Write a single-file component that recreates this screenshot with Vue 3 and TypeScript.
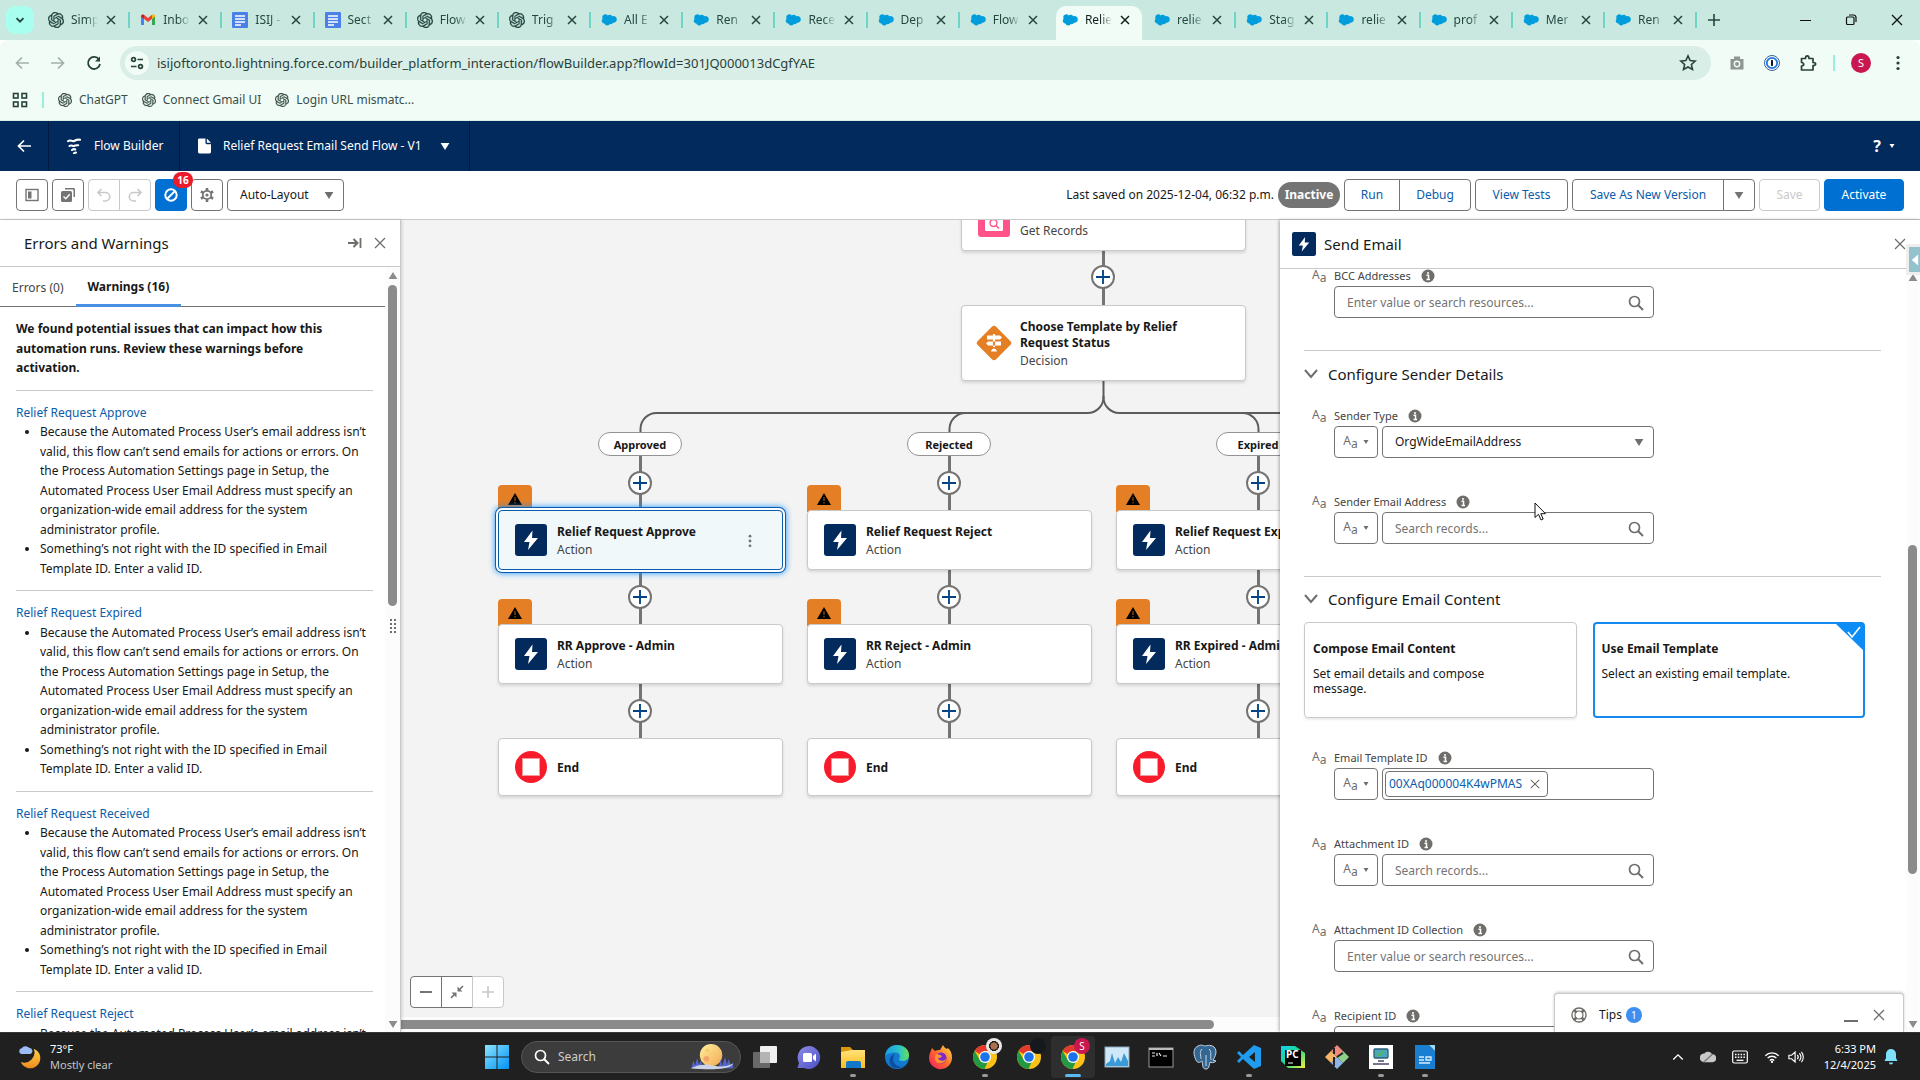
<script setup lang="ts">
import { ref } from 'vue'

interface BrowserTab { icon: string; title: string; active?: boolean }
interface Bookmark { title: string }
interface FlowNode { title: string; kind: string; icon: string; x: number; y: number; h: number; warn?: boolean; selected?: boolean }
interface Field { id: string; label: string; type: 'lookup' | 'resource' | 'select' | 'pill'; placeholder?: string }
interface TaskApp { icon: string; state?: 'open' | 'focus'; badge?: string }

const tabs: BrowserTab[] = [
  { icon: 'openai', title: 'Simp' },
  { icon: 'gmail', title: 'Inbo' },
  { icon: 'docs', title: 'ISIJ -' },
  { icon: 'docs', title: 'Sect' },
  { icon: 'openai', title: 'Flow' },
  { icon: 'openai', title: 'Trig' },
  { icon: 'cloud', title: 'All E' },
  { icon: 'cloud', title: 'Ren' },
  { icon: 'cloud', title: 'Rece' },
  { icon: 'cloud', title: 'Dep' },
  { icon: 'cloud', title: 'Flow' },
  { icon: 'cloud', title: 'Relie', active: true },
  { icon: 'cloud', title: 'relie' },
  { icon: 'cloud', title: 'Stag' },
  { icon: 'cloud', title: 'relie' },
  { icon: 'cloud', title: 'prof' },
  { icon: 'cloud', title: 'Mer' },
  { icon: 'cloud', title: 'Ren' },
]

const bookmarks: Bookmark[] = [
  { title: 'ChatGPT' },
  { title: 'Connect Gmail UI' },
  { title: 'Login URL mismatc...' },
]

const warnings = ['Relief Request Approve', 'Relief Request Expired', 'Relief Request Received', 'Relief Request Reject']

const columns = [97, 406, 715]
const nodes: FlowNode[] = [
  { title: 'Get Relief Request', kind: 'Get Records', icon: 'node-get', x: 560, y: -29, h: 60 },
  { title: 'Choose Template by Relief Request Status', kind: 'Decision', icon: 'node-decision', x: 560, y: 85, h: 76 },
  { title: 'Relief Request Approve', kind: 'Action', icon: 'node-action', x: 97, y: 290, h: 60, warn: true, selected: true },
  { title: 'Relief Request Reject', kind: 'Action', icon: 'node-action', x: 406, y: 290, h: 60, warn: true },
  { title: 'Relief Request Expired', kind: 'Action', icon: 'node-action', x: 715, y: 290, h: 60, warn: true },
  { title: 'RR Approve - Admin', kind: 'Action', icon: 'node-action', x: 97, y: 404, h: 60, warn: true },
  { title: 'RR Reject - Admin', kind: 'Action', icon: 'node-action', x: 406, y: 404, h: 60, warn: true },
  { title: 'RR Expired - Admin', kind: 'Action', icon: 'node-action', x: 715, y: 404, h: 60, warn: true },
  { title: 'End', kind: '', icon: 'node-end', x: 97, y: 518, h: 58 },
  { title: 'End', kind: '', icon: 'node-end', x: 406, y: 518, h: 58 },
  { title: 'End', kind: '', icon: 'node-end', x: 715, y: 518, h: 58 },
]
const branches = ['Approved', 'Rejected', 'Expired'].map((name, i) => ({ name, x: columns[i] + 100 }))
const adders = [
  { x: 690, y: 45 },
  ...columns.flatMap((x) => [251, 365, 479].map((y) => ({ x: x + 130, y }))),
]

const senderFields: Field[] = [
  { id: 'sender-type', label: 'Sender Type', type: 'select' },
  { id: 'sender-address', label: 'Sender Email Address', type: 'lookup', placeholder: 'Search records...' },
]
const contentFields: Field[] = [
  { id: 'template-id', label: 'Email Template ID', type: 'pill' },
  { id: 'attachment-id', label: 'Attachment ID', type: 'lookup', placeholder: 'Search records...' },
  { id: 'attachment-ids', label: 'Attachment ID Collection', type: 'resource', placeholder: 'Enter value or search resources...' },
  { id: 'recipient-id', label: 'Recipient ID', type: 'resource', placeholder: '' },
]
const sections = [
  { title: 'Configure Sender Details', fields: senderFields, cards: false },
  { title: 'Configure Email Content', fields: contentFields, cards: true },
]

const apps: TaskApp[] = [
  { icon: 'taskview' },
  { icon: 'chat' },
  { icon: 'folder', state: 'open' },
  { icon: 'edge' },
  { icon: 'firefox' },
  { icon: 'chrome', state: 'open', badge: 'face' },
  { icon: 'chrome', badge: 'dark' },
  { icon: 'chrome', state: 'focus', badge: 'pink' },
  { icon: 'monitor' },
  { icon: 'terminal' },
  { icon: 'postgres' },
  { icon: 'vscode', state: 'open' },
  { icon: 'pycharm' },
  { icon: 'git' },
  { icon: 'taskpro', state: 'open' },
  { icon: 'writer', state: 'open' },
]

const url = ref('isijoftoronto.lightning.force.com/builder_platform_interaction/flowBuilder.app?flowId=301JQ000013dCgfYAE')
const contentMode = ref('template')
const search = ref('')
</script>

<template>
  <svg class="defs" aria-hidden="true">
    <defs>
      <linearGradient id="g-win" x1="0" y1="0" x2="1" y2="1"><stop offset="0" stop-color="#8be3ff" /><stop offset="1" stop-color="#0093f5" /></linearGradient>
      <linearGradient id="g-chat" x1="0" y1="0" x2="1" y2="1"><stop offset="0" stop-color="#8f8be8" /><stop offset="1" stop-color="#4a4fc4" /></linearGradient>
      <linearGradient id="g-folder" x1="0" y1="0" x2="0" y2="1"><stop offset="0" stop-color="#ffe27a" /><stop offset="1" stop-color="#fbbd1d" /></linearGradient>
      <linearGradient id="g-edge" x1="0" y1="0" x2="1" y2="0"><stop offset="0" stop-color="#1b9de2" /><stop offset=".6" stop-color="#2cc3c9" /><stop offset="1" stop-color="#6ae04f" /></linearGradient>
      <linearGradient id="g-fox" x1="0" y1="1" x2="1" y2="0"><stop offset="0" stop-color="#f5156c" /><stop offset=".5" stop-color="#ff6a2a" /><stop offset="1" stop-color="#ffe14a" /></linearGradient>
      <linearGradient id="g-moon" x1="0" y1="0" x2="1" y2="1"><stop offset="0" stop-color="#fff0a0" /><stop offset="1" stop-color="#f2a850" /></linearGradient>
      <linearGradient id="g-cres" x1="0" y1="0" x2="0" y2="1"><stop offset="0" stop-color="#fcd34a" /><stop offset="1" stop-color="#f08a1c" /></linearGradient>
      <linearGradient id="g-pyc" x1="0" y1="0" x2="1" y2="1"><stop offset="0" stop-color="#12d0f5" /><stop offset=".5" stop-color="#20d98a" /><stop offset="1" stop-color="#f7f237" /></linearGradient>
    </defs>
    <symbol id="openai" viewBox="0 0 24 24"><path fill="currentColor" stroke="currentColor" stroke-width=".5" d="M22.2819 9.8211a5.9847 5.9847 0 0 0-.5157-4.9108 6.0462 6.0462 0 0 0-6.5098-2.9A6.0651 6.0651 0 0 0 4.9807 4.1818a5.9847 5.9847 0 0 0-3.9977 2.9 6.0462 6.0462 0 0 0 .7427 7.0966 5.98 5.98 0 0 0 .511 4.9107 6.051 6.051 0 0 0 6.5146 2.9001A5.9847 5.9847 0 0 0 13.2599 24a6.0557 6.0557 0 0 0 5.7718-4.2058 5.9894 5.9894 0 0 0 3.9977-2.9001 6.0557 6.0557 0 0 0-.7475-7.0729zm-9.022 12.6081a4.4755 4.4755 0 0 1-2.8764-1.0408l.1419-.0804 4.7783-2.7582a.7948.7948 0 0 0 .3927-.6813v-6.7369l2.02 1.1686a.071.071 0 0 1 .038.052v5.5826a4.504 4.504 0 0 1-4.4945 4.4944zm-9.6607-4.1254a4.4708 4.4708 0 0 1-.5346-3.0137l.142.0852 4.783 2.7582a.7712.7712 0 0 0 .7806 0l5.8428-3.3685v2.3324a.0804.0804 0 0 1-.0332.0615L9.74 19.9502a4.4992 4.4992 0 0 1-6.1408-1.6464zM2.3408 7.8956a4.485 4.485 0 0 1 2.3655-1.9728V11.6a.7664.7664 0 0 0 .3879.6765l5.8144 3.3543-2.0201 1.1685a.0757.0757 0 0 1-.071 0l-4.8303-2.7865A4.504 4.504 0 0 1 2.3408 7.872zm16.5963 3.8558L13.1038 8.364 15.1192 7.2a.0757.0757 0 0 1 .071 0l4.8303 2.7913a4.4944 4.4944 0 0 1-.6765 8.1042v-5.6772a.79.79 0 0 0-.407-.667zm2.0107-3.0231l-.142-.0852-4.7735-2.7818a.7759.7759 0 0 0-.7854 0L9.409 9.2297V6.8974a.0662.0662 0 0 1 .0284-.0615l4.8303-2.7866a4.4992 4.4992 0 0 1 6.6802 4.66zM8.3065 12.863l-2.02-1.1638a.0804.0804 0 0 1-.038-.0567V6.0742a4.4992 4.4992 0 0 1 7.3757-3.4537l-.142.0805L8.704 5.459a.7948.7948 0 0 0-.3927.6813zm1.0976-2.3654l2.602-1.4998 2.6069 1.4998v2.9994l-2.5974 1.4997-2.6067-1.4997Z" /></symbol>
    <symbol id="gmail" viewBox="0 0 16 16"><path d="M1 3.500v9.500h3V7z" fill="#4285f4" /><path d="M15 3.500v9.500h-3V7z" fill="#34a853" /><path d="M1 4.500 8 10l7-5.500-1-1.500-2-.3L8 6 4 2.700 2 3z" fill="#ea4335" /><path d="M12 3v4l3-2.500C15 3 13.500 2 12 3z" fill="#fbbc04" /><path d="M4 3v4L1 4.500C1 3 2.500 2 4 3z" fill="#c5221f" /></symbol>
    <symbol id="docs" viewBox="0 0 16 16"><rect width="16" height="16" rx="1" fill="#4a80e8" /><path d="M3 4h10M3 7h10M3 10h10M3 13h6" stroke="#fff" stroke-width="1.300" /></symbol>
    <symbol id="cloud" viewBox="0 0 16 16"><path d="M6.700 3.600a3 3 0 0 1 4.600.6 3.400 3.400 0 1 1 .8 6.600 2.700 2.700 0 0 1-3.400 1.100 3 3 0 0 1-5.400-.3A2.900 2.900 0 0 1 1.600 6.700 3 3 0 0 1 6.700 3.600z" fill="#009ddc" /></symbol>
    <symbol id="x" viewBox="0 0 12 12"><path d="M2 2l8 8M10 2l-8 8" stroke="currentColor" stroke-width="1.500" fill="none" /></symbol>
    <symbol id="x-thin" viewBox="0 0 12 12"><path d="M1 1l10 10M11 1L1 11" stroke="currentColor" stroke-width="1.300" fill="none" /></symbol>
    <symbol id="plus" viewBox="0 0 12 12"><path d="M6 0v12M0 6h12" stroke="currentColor" stroke-width="1.600" /></symbol>
    <symbol id="down" viewBox="0 0 12 12"><path d="M2.500 4.200 6 7.700l3.500-3.500" stroke="currentColor" stroke-width="1.900" fill="none" /></symbol>
    <symbol id="restore" viewBox="0 0 12 12"><rect x="1.500" y="3" width="7.500" height="7.500" rx="1" fill="none" stroke="currentColor" stroke-width="1.200" /><path d="M4 1h4.500A2.500 2.500 0 0 1 11 3.500V8" fill="none" stroke="currentColor" stroke-width="1.200" /></symbol>
    <symbol id="arrow-l" viewBox="0 0 16 16"><path d="M8 2.500 2.500 8 8 13.500M2.500 8H15" stroke="currentColor" stroke-width="1.700" fill="none" /></symbol>
    <symbol id="arrow-r" viewBox="0 0 16 16"><path d="M8 2.500 13.500 8 8 13.500M13.500 8H1" stroke="currentColor" stroke-width="1.700" fill="none" /></symbol>
    <symbol id="reload" viewBox="0 0 16 16"><path d="M13 4.500A6 6 0 1 0 14 9" stroke="currentColor" stroke-width="1.800" fill="none" /><path d="M14 1.500v5H9z" fill="currentColor" /></symbol>
    <symbol id="tune" viewBox="0 0 16 16"><g stroke="currentColor" stroke-width="1.700" fill="none"><circle cx="4.500" cy="4.500" r="1.900" /><path d="M8.500 4.500H14M2 11.500h5.500" /><circle cx="11.500" cy="11.500" r="1.900" /></g></symbol>
    <symbol id="star" viewBox="0 0 16 16"><path d="M8 1.700l1.900 4.100 4.500.5-3.400 3 1 4.400L8 11.500l-4 2.200 1-4.400-3.400-3 4.500-.5z" fill="none" stroke="currentColor" stroke-width="1.400" /></symbol>
    <symbol id="camera" viewBox="0 0 16 16"><path fill="#8f9693" d="M5 3V1.500h6V4h3.500v10.500h-13V4H5z" /><circle cx="8" cy="9" r="3.400" fill="#f1fcf6" /><circle cx="8" cy="9" r="2" fill="#8f9693" /></symbol>
    <symbol id="onepass" viewBox="0 0 16 16"><circle cx="8" cy="8" r="7.500" fill="#fff" stroke="#3c5f8f" /><circle cx="8" cy="8" r="5.200" fill="#fff" stroke="#1a78e0" stroke-width="1.800" /><rect x="7" y="4.800" width="2" height="6.400" rx="1" fill="#113" /></symbol>
    <symbol id="puzzle" viewBox="0 0 18 18"><path d="M2.500 4.500h4c0-3.500 3.500-3.500 3.500 0h4v4c3.500 0 3.500 3 0 3v4.500H2.500v-4c3-.5 3-3 0-3.500z" fill="none" stroke="currentColor" stroke-width="1.700" stroke-linejoin="round" /></symbol>
    <symbol id="grid4" viewBox="0 0 16 16"><g fill="none" stroke="currentColor" stroke-width="1.600"><rect x="1.500" y="1.500" width="4.500" height="4.500" /><rect x="10" y="1.500" width="4.500" height="4.500" /><rect x="1.500" y="10" width="4.500" height="4.500" /><rect x="10" y="10" width="4.500" height="4.500" /></g></symbol>
    <symbol id="dots" viewBox="0 0 16 16"><g fill="currentColor"><circle cx="8" cy="2.500" r="1.600" /><circle cx="8" cy="8" r="1.600" /><circle cx="8" cy="13.500" r="1.600" /></g></symbol>
    <symbol id="caret" viewBox="0 0 10 8"><path d="M0 0h10L5 8z" fill="currentColor" /></symbol>
    <symbol id="flow" viewBox="0 0 16 16"><g fill="none" stroke="currentColor" stroke-width="2.100" stroke-linecap="round"><path d="M2 3.200c2.500-2 4 .8 6-.2s3.500-2 6-1.200" /><path d="M3.500 8c2-1.500 3 .3 4.500 0s2.500-1.200 4.200-.7" /><path d="M6 12c.8-.6 2.400-1 3.200-.5M8 15.200l2-.6" /></g></symbol>
    <symbol id="doc" viewBox="0 0 14 16"><path d="M2 0h6v4.500C8 5.400 8.600 6 9.500 6H14v8.500c0 .8-.7 1.500-1.500 1.500h-11C.7 16 0 15.300 0 14.500V1.500C0 .7.700 0 1.500 0zM9.500 0 14 4.500H9.500z" fill="currentColor" /></symbol>
    <symbol id="panel" viewBox="0 0 14 14"><rect x="1" y="1.500" width="12" height="11" fill="none" stroke="currentColor" stroke-width="1.400" /><rect x="3" y="3.500" width="3.500" height="7" fill="currentColor" /></symbol>
    <symbol id="multi" viewBox="0 0 14 14"><path d="M4 0h8.500c.8 0 1.500.7 1.500 1.500V9h-1.500V2.500c0-.6-.4-1-1-1H4z" fill="currentColor" /><rect x="0" y="3" width="11" height="11" rx="1.500" fill="currentColor" /><path d="M2.500 8.500l2.300 2.300L8.700 6.300" fill="none" stroke="#fff" stroke-width="1.400" /></symbol>
    <symbol id="undo" viewBox="0 0 14 14"><path d="M4.500 1 1 4.500 4.500 8M1 4.500h7.500a4 4 0 0 1 0 8.500H6" fill="none" stroke="currentColor" stroke-width="1.600" /></symbol>
    <symbol id="redo" viewBox="0 0 14 14"><path d="M9.500 1 13 4.500 9.500 8M13 4.500H5.500a4 4 0 0 0 0 8.500H8" fill="none" stroke="currentColor" stroke-width="1.600" /></symbol>
    <symbol id="ban" viewBox="0 0 14 14"><circle cx="7" cy="7" r="5.700" fill="none" stroke="currentColor" stroke-width="2" /><path d="M3.500 10.500l7-7" stroke="currentColor" stroke-width="2" /></symbol>
    <symbol id="gear" viewBox="0 0 14 14"><circle cx="7" cy="7" r="4.200" fill="none" stroke="currentColor" stroke-width="1.800" /><circle cx="7" cy="7" r="1.600" fill="currentColor" /><g stroke="currentColor" stroke-width="2.600"><path d="M7 0v2.500M7 11.500V14M.9 3.500l2.200 1.200M10.900 9.300l2.200 1.200M.9 10.500l2.200-1.200M10.900 4.700l2.200-1.200" /></g></symbol>
    <symbol id="dock" viewBox="0 0 14 12"><path d="M0 6h9M5.500 2 9.500 6l-4 4" fill="none" stroke="currentColor" stroke-width="2" /><path d="M12.500 1v10" stroke="currentColor" stroke-width="1.800" /></symbol>
    <symbol id="grip" viewBox="0 0 8 16"><g fill="currentColor"><path d="M1 1h2v2H1zM5 1h2v2H5zM1 5h2v2H1zM5 5h2v2H5zM1 9h2v2H1zM5 9h2v2H5zM1 13h2v2H1zM5 13h2v2H5z" /></g></symbol>
    <symbol id="warn" viewBox="0 0 14 12"><path d="M7 0l7 12H0z" fill="#000" /><path d="M7 4v4M7 9v1.500" stroke="#8a4a10" stroke-width="1.300" /></symbol>
    <symbol id="node-action" viewBox="0 0 32 32"><rect width="32" height="32" rx="3" fill="#022a5c" /><path d="M17.500 6.500 9 18h5.500l-1.500 8L23 14h-6z" fill="#fff" /></symbol>
    <symbol id="node-get" viewBox="0 0 32 32"><rect width="32" height="32" rx="3" fill="#ff538a" /><rect x="7" y="7" width="18" height="19" rx="1" fill="#fff" /><circle cx="15.500" cy="18" r="3.500" fill="none" stroke="#ff538a" stroke-width="1.400" /><path d="M18 20.500l3 3" stroke="#ff538a" stroke-width="1.400" /></symbol>
    <symbol id="node-decision" viewBox="0 0 38 38"><rect x="6" y="6" width="26" height="26" rx="3" fill="#e47f26" transform="rotate(45 19 19)" /><g fill="#fff"><path d="M12 11.500h13l2 2-2 2H12zM26 17.500H13l-2 2 2 2h13zM18 10h2v13h-2zM16 27.500c1-4 5-4 6 0z" /></g></symbol>
    <symbol id="node-end" viewBox="0 0 32 32"><circle cx="16" cy="16" r="16" fill="#f71b2b" /><rect x="7.500" y="7.500" width="17" height="17" fill="#fff" stroke="#f59a9a" /></symbol>
    <symbol id="minus" viewBox="0 0 12 12"><path d="M0 6h12" stroke="currentColor" stroke-width="2" /></symbol>
    <symbol id="fit" viewBox="0 0 14 14"><g fill="none" stroke="currentColor" stroke-width="1.700"><path d="M13 1 9 5M1 13l4-4" /></g><path d="M7.500 6.500v-5l5 5zM6.500 7.500v5l-5-5z" fill="currentColor" /></symbol>
    <symbol id="chev" viewBox="0 0 14 10"><path d="M1 1l6 7 6-7" fill="none" stroke="currentColor" stroke-width="2" /></symbol>
    <symbol id="info" viewBox="0 0 14 14"><circle cx="7" cy="7" r="6.500" fill="#706e6b" /><path d="M7 3v2M5.500 6.300H7.500V10.500M5.500 10.500h3.500" stroke="#fff" stroke-width="1.500" fill="none" /></symbol>
    <symbol id="lens" viewBox="0 0 16 16"><circle cx="6.500" cy="6.500" r="5" fill="none" stroke="currentColor" stroke-width="1.700" /><path d="M10 10l5 5" stroke="currentColor" stroke-width="2" /></symbol>
    <symbol id="buoy" viewBox="0 0 16 16"><circle cx="8" cy="8" r="7" fill="none" stroke="#706e6b" stroke-width="1.400" /><circle cx="8" cy="8" r="4" fill="none" stroke="#706e6b" stroke-width="1.200" /><path d="M3 3l2.500 2.500M13 3l-2.500 2.500M3 13l2.500-2.500M13 13l-2.500-2.500" stroke="#706e6b" stroke-width="2.600" /></symbol>
    <symbol id="weather" viewBox="0 0 26 26"><path d="M17 4a11 11 0 0 1-14 14.500A11 11 0 1 0 17 4z" fill="url(#g-cres)" /><path d="M4 3.500a5 5 0 0 1 8-.5 3.500 3.500 0 0 1 1.500 6.700H3.500A3.200 3.200 0 0 1 4 3.500z" fill="#9dbcf5" /></symbol>
    <symbol id="win" viewBox="0 0 24 24"><path d="M0 0h11.500v11.500H0zM12.500 0H24v11.500H12.500zM0 12.500h11.500V24H0zM12.500 12.500H24V24H12.500z" fill="url(#g-win)" /></symbol>
    <symbol id="moon" viewBox="0 0 46 30"><circle cx="22" cy="13" r="12" fill="url(#g-moon)" /><circle cx="18" cy="8" r="2" fill="#f6cf6a" /><circle cx="17" cy="17" r="3" fill="#f4a46a" /><path d="M1 27l2-8 2 5 2-8 2 7 2-4 3 8zM30 27l2-9 2 6 3-9 2 8 2-6 2 7 2-3 1 6z" fill="#5566cc" /><path d="M0 27q12-6 24-3t22-2q-4 6-22 6-16 0-24-1z" fill="#ccd5e8" /></symbol>
    <symbol id="taskview" viewBox="0 0 26 26"><rect x="8" y="2" width="17" height="17" rx="1" fill="#f0f0f0" /><rect x="1" y="8" width="17" height="16" rx="1" fill="#777" opacity=".85" /><rect x="8" y="8" width="10" height="11" fill="#b4b4b4" /></symbol>
    <symbol id="chat" viewBox="0 0 26 26"><path d="M13 2a11.500 11.500 0 1 1-5 22H1.500L3 19A11.500 11.500 0 0 1 13 2z" fill="url(#g-chat)" /><rect x="7" y="9" width="9" height="9" rx="1.500" fill="#fff" /><path d="M17 12l3-2.500v8L17 15z" fill="#fff" /></symbol>
    <symbol id="folder" viewBox="0 0 26 26"><path d="M1 3h9l3 3h12v4H1z" fill="#d9970d" /><path d="M1 8l11-2h13v18H1z" fill="url(#g-folder)" /><path d="M6 24v-5a2 2 0 0 1 2-2h11a2 2 0 0 1 2 2v5z" fill="#1279c9" /></symbol>
    <symbol id="edge" viewBox="0 0 26 26"><circle cx="13" cy="13" r="12" fill="#1378cf" /><path d="M1.200 11.500C2 5 7 1 13 1c7 0 12 4.500 12 10 0 4-3 6-6.500 6-2.500 0-4-.8-3.500-2 1.500-2 1.500-6-3-6.500-4-.5-8 1-10.800 3z" fill="url(#g-edge)" /><path d="M9.500 13c-1.500 6 3 10.500 9.500 9.500A12 12 0 0 1 8 23C4 19 5 12 10.500 10 9.800 11 9.700 12 9.500 13z" fill="#0c4f9e" /></symbol>
    <symbol id="firefox" viewBox="0 0 26 26"><path d="M2 9l2-5 3 3c2-1 3-1 5-1l3-5c1 2 2 3 4 4l1-1c3 3 4 6 4 9.500A11.500 11.500 0 1 1 2 9z" fill="url(#g-fox)" /><circle cx="13" cy="14" r="5.500" fill="#7a2bd0" /><path d="M8 10c3 0 4 1 6 2-1 2-3 2-4 2 1 3 5 4 8 1-1 4-5 5-8 4S6 14 8 10z" fill="#ff9330" /></symbol>
    <symbol id="chrome" viewBox="0 0 26 26"><g transform="translate(1 1)"><circle cx="12" cy="12" r="12" fill="#fbc116" /><path d="M12 0a12 12 0 0 1 10.400 6H12L6.800 9 1.600 6A12 12 0 0 1 12 0z" fill="#e33b2e" /><path d="M1.600 6 6.800 15 12 18l2.500-.6L11.500 24A12 12 0 0 1 1.600 6z" fill="#229a44" /><circle cx="12" cy="12" r="6" fill="#fff" /><circle cx="12" cy="12" r="4.800" fill="#1a73e8" /></g></symbol>
    <symbol id="monitor" viewBox="0 0 26 26"><rect x="1" y="3" width="24" height="20" fill="#cfe8f7" stroke="#8aa5b8" /><path d="M2 20l4-3 2-8 3 10 3-6 3 5 3-9 4 8v5H2z" fill="#3a9bd8" /></symbol>
    <symbol id="terminal" viewBox="0 0 26 26"><rect x="1" y="4" width="24" height="19" fill="#000" stroke="#9a9a9a" /><path d="M1 4h24v2H1z" fill="#bbb" /><path d="M4 9h3M4 12h3M9 9v3M11 9l2 3M15 12h4" stroke="#eee" stroke-width="1.200" /></symbol>
    <symbol id="postgres" viewBox="0 0 26 26"><path d="M6 2c4-2 6 0 7 0s5-2 9 1c4 4 1 10-1 13l3 1c-2 2-5 2-6 1-1 4-1 7-4 7-4 0-3-4-4-8-2 2-5 2-6-1C2 12 0 5 6 2z" fill="#336791" stroke="#c8d6e2" /><path d="M10 5c-3 3-1 6-1 10M17 5c3 3 1 6 2 11M14 11v11" stroke="#c8d6e2" fill="none" /></symbol>
    <symbol id="vscode" viewBox="0 0 26 26"><path d="M18 1l7 3v18l-7 3L7 15l-4 4-2-2 4-4-4-4 2-2 4 4zm1 7-6 5 6 5z" fill="#1f9cf0" /></symbol>
    <symbol id="pycharm" viewBox="0 0 26 26"><path d="M1 2h14l10 7v15H8L1 17z" fill="url(#g-pyc)" /><rect x="5" y="6" width="16" height="16" fill="#000" /><path d="M8 19h5" stroke="#fff" /></symbol>
    <symbol id="git" viewBox="0 0 26 26"><path d="M13 1l6 6-6 6-6-6z" fill="#f08a80" /><path d="M7 7l6 6-6 6-6-6z" fill="#f5b566" /><path d="M19 7l6 6-6 6-6-6z" fill="#8fd18a" /><path d="M13 13l6 6-6 6-6-6z" fill="#8fb4ea" /><path d="M10 4v6M10 13v9M13 13l6-4" stroke="#222" stroke-width="2" /></symbol>
    <symbol id="taskpro" viewBox="0 0 26 26"><rect x="1" y="1" width="24" height="24" fill="#fff" /><rect x="6" y="5" width="14" height="9" rx="1" fill="#4fa6b8" stroke="#2b5f7c" stroke-width="1.300" /><path d="M9 9.500l2 2 5-5" stroke="#4cbf4c" stroke-width="1.500" fill="none" /><path d="M10 17h6M5 20h16" stroke="#4a4a6a" stroke-width="1.500" /></symbol>
    <symbol id="writer" viewBox="0 0 26 26"><path d="M3 1h14l6 6v18H3z" fill="#1a7fd0" /><path d="M17 1h6v6z" fill="#9adcf8" /><path d="M7 13h5M7 16h5M7 19h11M14 13h5v3h-5z" stroke="#d8efff" stroke-width="1.300" fill="none" /></symbol>
    <symbol id="chev-up" viewBox="0 0 14 10"><path d="M1.500 8 7 2.500 12.500 8" fill="none" stroke="currentColor" stroke-width="1.600" /></symbol>
    <symbol id="onedrive" viewBox="0 0 18 14"><path d="M5 3a5 5 0 0 1 8.500 1A4.500 4.500 0 0 1 14 13H4.500A4 4 0 0 1 5 3z" fill="#c8c8c8" /><path d="M4 13L14 4" stroke="#777" stroke-width="1.500" /></symbol>
    <symbol id="keyboard" viewBox="0 0 16 14"><rect x=".7" y="1" width="14.600" height="12" rx="1.500" fill="none" stroke="currentColor" stroke-width="1.200" /><path d="M3 4.500h10M3 7.200h10" stroke="currentColor" stroke-dasharray="1.500 1.300" stroke-width="1.400" /><path d="M4.500 10.300h7" stroke="currentColor" stroke-width="1.300" /></symbol>
    <symbol id="wifi" viewBox="0 0 18 14"><g fill="none" stroke="currentColor" stroke-width="1.500"><path d="M1.500 5.500a10.500 10.500 0 0 1 15 0M4 8.300a7 7 0 0 1 10 0M6.500 11a3.600 3.600 0 0 1 5 0" /></g><circle cx="9" cy="12.500" r="1.300" fill="currentColor" /></symbol>
    <symbol id="speaker" viewBox="0 0 18 14"><g fill="none" stroke="currentColor" stroke-width="1.300"><path d="M1 5v4h3l4 3.500v-11L4 5zM10.500 4.500a4 4 0 0 1 0 5M12.800 2.800a6 6 0 0 1 0 8.400M15 1.300a8.500 8.500 0 0 1 0 11.400" /></g></symbol>
    <symbol id="bell" viewBox="0 0 14 16"><path d="M7 0a5 5 0 0 1 5 5v4l1.500 3H.5L2 9V5a5 5 0 0 1 5-5zM5 13.500h4a2 2 0 0 1-4 0z" fill="#7fe0fb" /></symbol>
    <symbol id="pointer" viewBox="0 0 12 19"><path d="M1 1v14.500l3.500-3.200L7 18l2.200-1-2.400-5.300H11.500z" fill="#fff" stroke="#111" /></symbol>
  </svg>

  <div class="screen">
    <header class="tabstrip">
      <button class="tab-search" aria-label="Search tabs"><svg class="i12"><use href="#down" /></svg></button>
      <nav class="tabs">
        <div v-for="(t, i) in tabs" :key="i" class="tab" :class="{ active: t.active, before: tabs[i + 1]?.active }">
          <svg class="i16"><use :href="'#' + t.icon" /></svg>
          <span class="tab-title">{{ t.title }}</span>
          <button class="bare" aria-label="Close tab"><svg class="i12"><use href="#x" /></svg></button>
        </div>
      </nav>
      <button class="bare new-tab" aria-label="New tab"><svg class="i12"><use href="#plus" /></svg></button>
      <div class="win-buttons">
        <button class="bare" aria-label="Minimize"><span class="min-line"></span></button>
        <button class="bare" aria-label="Restore"><svg class="i12"><use href="#restore" /></svg></button>
        <button class="bare" aria-label="Close"><svg class="i12"><use href="#x-thin" /></svg></button>
      </div>
    </header>

    <div class="chrome">
      <div class="address-row">
        <button class="bare nav muted" aria-label="Back"><svg class="i16"><use href="#arrow-l" /></svg></button>
        <button class="bare nav muted" aria-label="Forward"><svg class="i16"><use href="#arrow-r" /></svg></button>
        <button class="bare nav" aria-label="Reload"><svg class="i16"><use href="#reload" /></svg></button>
        <div class="omnibox">
          <span class="site-info"><svg class="i16"><use href="#tune" /></svg></span>
          <input v-model="url" class="url" aria-label="Address" />
          <button class="bare" aria-label="Bookmark"><svg class="i18"><use href="#star" /></svg></button>
        </div>
        <div class="extensions">
          <button class="bare" aria-label="Capture"><svg class="i16"><use href="#camera" /></svg></button>
          <button class="bare" aria-label="Passwords"><svg class="i16"><use href="#onepass" /></svg></button>
          <button class="bare" aria-label="Extensions"><svg class="i18"><use href="#puzzle" /></svg></button>
          <span class="mint-line"></span>
          <button class="avatar">S</button>
          <button class="bare" aria-label="Menu"><svg class="i16"><use href="#dots" /></svg></button>
        </div>
      </div>
      <nav class="bookmarks">
        <button class="bare" aria-label="Apps"><svg class="i16"><use href="#grid4" /></svg></button>
        <span class="mint-line"></span>
        <a v-for="b in bookmarks" :key="b.title" href="#"><svg class="i14"><use href="#openai" /></svg>{{ b.title }}</a>
      </nav>
    </div>

    <header class="app-header">
      <button class="bare cell back" aria-label="Back"><svg class="i16"><use href="#arrow-l" /></svg></button>
      <div class="cell brand"><svg class="i16"><use href="#flow" /></svg><span>Flow Builder</span></div>
      <button class="bare cell flow-name"><svg class="doc"><use href="#doc" /></svg><span>Relief Request Email Send Flow - V1</span><svg class="caret"><use href="#caret" /></svg></button>
      <button class="bare help"><b>?</b><svg class="caret-s"><use href="#caret" /></svg></button>
    </header>

    <div class="toolbar">
      <button class="btn icon" aria-label="Toggle toolbox"><svg class="i14"><use href="#panel" /></svg></button>
      <button class="btn icon" aria-label="Select elements"><svg class="i14"><use href="#multi" /></svg></button>
      <div class="group">
        <button class="btn icon off" disabled aria-label="Undo"><svg class="i14"><use href="#undo" /></svg></button>
        <button class="btn icon off" disabled aria-label="Redo"><svg class="i14"><use href="#redo" /></svg></button>
      </div>
      <button class="btn icon primary issues" aria-label="Show errors"><svg class="i14"><use href="#ban" /></svg><span class="count">16</span></button>
      <button class="btn icon" aria-label="Settings"><svg class="i14"><use href="#gear" /></svg></button>
      <div class="select-wrap layout">
        <select class="control" aria-label="Layout"><option>Auto-Layout</option></select>
        <svg class="caret"><use href="#caret" /></svg>
      </div>
      <div class="toolbar-right">
        <span class="saved">Last saved on 2025-12-04, 06:32 p.m.</span>
        <span class="status">Inactive</span>
        <div class="group">
          <button class="btn w-run">Run</button>
          <button class="btn w-debug">Debug</button>
        </div>
        <button class="btn w-tests">View Tests</button>
        <div class="group">
          <button class="btn w-version">Save As New Version</button>
          <button class="btn icon" aria-label="More save options"><svg class="caret"><use href="#caret" /></svg></button>
        </div>
        <button class="btn off w-save" disabled>Save</button>
        <button class="btn primary w-activate">Activate</button>
      </div>
    </div>

    <main class="workspace">
      <aside class="issues-panel">
        <div class="panel-head">
          <h2>Errors and Warnings</h2>
          <button class="bare" aria-label="Dock"><svg class="i14"><use href="#dock" /></svg></button>
          <button class="bare" aria-label="Close panel"><svg class="i12"><use href="#x-thin" /></svg></button>
        </div>
        <div class="panel-body">
          <div class="issue-list">
            <div class="issue-tabs" role="tablist">
              <button class="bare" role="tab">Errors (0)</button>
              <button class="bare current" role="tab" aria-selected="true">Warnings (16)</button>
            </div>
            <p class="lead">We found potential issues that can impact how this automation runs. Review these warnings before activation.</p>
            <section v-for="w in warnings" :key="w" class="issue">
              <a href="#">{{ w }}</a>
              <ul>
                <li>Because the Automated Process User’s email address isn’t valid, this flow can’t send emails for actions or errors. On the Process Automation Settings page in Setup, the Automated Process User Email Address must specify an organization-wide email address for the system administrator profile.</li>
                <li>Something’s not right with the ID specified in Email Template ID. Enter a valid ID.</li>
              </ul>
            </section>
          </div>
          <div class="scrollbar left-scroll">
            <svg class="tri flip"><use href="#caret" /></svg>
            <span class="thumb"></span>
            <svg class="grip"><use href="#grip" /></svg>
            <svg class="tri last"><use href="#caret" /></svg>
          </div>
        </div>
      </aside>

      <section class="canvas">
        <div class="diagram">
          <svg class="wires">
            <g class="v">
              <path d="M702.500 31V85M239.500 236V518M548.500 236V518M857.500 236V518" />
            </g>
            <g class="h">
              <path d="M702.500 161v15a16 16 0 0 1-16 17H256a16 16 0 0 0-16.500 16v5" />
              <path d="M686 193H565a16 16 0 0 0-16.500 16v5" />
              <path d="M702.500 176a16 16 0 0 0 16 17H841a16 16 0 0 1 16.500 16v5M841 193h60" />
            </g>
          </svg>
          <button v-for="(a, i) in adders" :key="'a' + i" class="adder" aria-label="Add element" :style="{ left: a.x + 'px', top: a.y + 'px' }"><svg class="i14"><use href="#plus" /></svg></button>
          <span v-for="b in branches" :key="b.name" class="branch" :style="{ left: b.x + 'px' }">{{ b.name }}</span>
          <template v-for="(n, i) in nodes" :key="'n' + i">
            <span v-if="n.warn" class="warn" :style="{ left: n.x + 'px', top: n.y - 25 + 'px' }"><svg><use href="#warn" /></svg></span>
            <article class="node" :class="{ selected: n.selected }" :style="{ left: n.x + 'px', top: n.y + 'px', height: n.h + 'px' }">
              <span class="node-icon"><svg :class="n.icon"><use :href="'#' + n.icon" /></svg></span>
              <div class="node-text"><strong>{{ n.title }}</strong><span v-if="n.kind">{{ n.kind }}</span></div>
              <button v-if="n.selected" class="bare node-menu" aria-label="Element menu"><svg class="i14"><use href="#dots" /></svg></button>
            </article>
          </template>
          <div class="group zoom">
            <button class="btn icon" aria-label="Zoom out"><svg class="i12"><use href="#minus" /></svg></button>
            <button class="btn icon" aria-label="Fit"><svg class="i14"><use href="#fit" /></svg></button>
            <button class="btn icon off" disabled aria-label="Zoom in"><svg class="i12"><use href="#plus" /></svg></button>
          </div>
        </div>
        <div class="h-scroll"><span></span></div>
      </section>

      <aside class="props">
        <div class="props-head">
          <svg class="i24"><use href="#node-action" /></svg>
          <h2>Send Email</h2>
          <button class="bare" aria-label="Close"><svg class="i12"><use href="#x-thin" /></svg></button>
        </div>
        <div class="props-body">
          <form class="form" @submit.prevent>
            <div class="field">
              <div class="label-row"><span class="aa"><i>A</i><i>a</i></span><label for="bcc">BCC Addresses</label><svg class="i14"><use href="#info" /></svg></div>
              <div class="control-row"><div class="input-wrap"><input id="bcc" class="control" placeholder="Enter value or search resources..." /><svg class="i16"><use href="#lens" /></svg></div></div>
            </div>
            <section v-for="s in sections" :key="s.title" class="group-section" :class="{ tight: s.cards }">
              <h3><svg class="chev"><use href="#chev" /></svg>{{ s.title }}</h3>
              <div v-if="s.cards" class="choices">
                <label class="choice" :class="{ on: contentMode === 'compose' }">
                  <input v-model="contentMode" type="radio" name="mode" value="compose" />
                  <b>Compose Email Content</b><span>Set email details and compose message.</span>
                </label>
                <label class="choice" :class="{ on: contentMode === 'template' }">
                  <input v-model="contentMode" type="radio" name="mode" value="template" />
                  <b>Use Email Template</b><span>Select an existing email template.</span>
                  <svg class="tick" viewBox="0 0 29 28"><path d="M0 0h29v28z" fill="#0b8df5" /><path d="M13 9l4 5 8-10" fill="none" stroke="#fff" stroke-width="1.600" /></svg>
                </label>
              </div>
              <div class="fields">
                <div v-for="f in s.fields" :key="f.id" class="field">
                  <div class="label-row"><span class="aa"><i>A</i><i>a</i></span><label :for="f.id">{{ f.label }}</label><svg class="i14"><use href="#info" /></svg></div>
                  <div class="control-row">
                    <button v-if="f.type !== 'resource'" class="btn type" aria-label="Value type"><span class="aa"><i>A</i><i>a</i></span><svg class="caret-s"><use href="#caret" /></svg></button>
                    <div v-if="f.type === 'select'" class="input-wrap"><select :id="f.id" class="control"><option>OrgWideEmailAddress</option></select><svg class="caret"><use href="#caret" /></svg></div>
                    <div v-else-if="f.type === 'pill'" class="input-wrap pill-box"><span class="pill">00XAq000004K4wPMAS<button class="bare" aria-label="Remove"><svg class="i10"><use href="#x-thin" /></svg></button></span><input :id="f.id" class="pill-input" /></div>
                    <div v-else class="input-wrap"><input :id="f.id" class="control" :placeholder="f.placeholder" /><svg class="i16"><use href="#lens" /></svg></div>
                  </div>
                </div>
              </div>
            </section>
          </form>
          <div class="scrollbar right-scroll">
            <svg class="tri flip"><use href="#caret" /></svg>
            <span class="thumb"></span>
            <svg class="tri last"><use href="#caret" /></svg>
          </div>
        </div>
        <div class="side-handle"><svg viewBox="0 0 10 14"><path d="M9 0v14L1 7z" fill="#fff" /></svg></div>
        <svg class="pointer"><use href="#pointer" /></svg>
        <div class="tips">
          <svg class="i16"><use href="#buoy" /></svg><span>Tips</span><em>1</em>
          <button class="bare" aria-label="Minimize tips"><span class="tip-line"></span></button>
          <button class="bare" aria-label="Close tips"><svg class="i12"><use href="#x-thin" /></svg></button>
        </div>
      </aside>
    </main>

    <footer class="taskbar">
      <div class="weather"><svg class="i24"><use href="#weather" /></svg><div><span>73°F</span><small>Mostly clear</small></div></div>
      <button class="bare start" aria-label="Start"><svg class="i24"><use href="#win" /></svg></button>
      <div class="search"><svg class="i16"><use href="#lens" /></svg><input v-model="search" placeholder="Search" aria-label="Search" /><svg class="moon"><use href="#moon" /></svg></div>
      <div class="apps">
        <button v-for="(a, i) in apps" :key="i" class="bare app" :class="a.state" :aria-label="a.icon">
          <svg><use :href="'#' + a.icon" /></svg>
          <span v-if="a.badge" class="badge" :class="a.badge">{{ a.badge === 'pink' ? 'S' : '' }}</span>
          <span v-if="a.icon === 'pycharm'" class="pc">PC</span>
        </button>
      </div>
      <div class="tray">
        <svg class="i12"><use href="#chev-up" /></svg>
        <svg class="i16"><use href="#onedrive" /></svg>
        <svg class="i16"><use href="#keyboard" /></svg>
        <svg class="i16"><use href="#wifi" /></svg>
        <svg class="i16"><use href="#speaker" /></svg>
        <div class="clock"><span>6:33 PM</span><span>12/4/2025</span></div>
        <svg class="i14"><use href="#bell" /></svg>
      </div>
    </footer>
  </div>
</template>

<style>
body { margin: 0; overflow: hidden; }
</style>

<style scoped>
* { box-sizing: border-box; }
.defs { position: absolute; width: 0; height: 0; }
.screen { display: flex; flex-direction: column; height: 100vh; font: 12px/20px "Noto Sans", "Open Sans", sans-serif; color: #181818; background: #fff; }
svg { display: block; flex: none; }
h2, h3, p, ul { margin: 0; font-weight: 400; }
button, input, select { font: inherit; color: inherit; }
a { text-decoration: none; }
.bare { display: flex; align-items: center; justify-content: center; padding: 0; border: 0; background: none; flex: none; }
.i10 { width: 10px; height: 10px; }
.i12 { width: 12px; height: 12px; }
.i14 { width: 14px; height: 14px; }
.i16 { width: 16px; height: 16px; }
.i18 { width: 18px; height: 18px; }
.i24 { width: 24px; height: 24px; }
.caret { width: 10px; height: 7px; }
.caret-s { width: 6px; height: 4px; }

/* browser */
.tabstrip { display: flex; align-items: stretch; height: 40px; background: #c8e8e0; flex: none; color: #24473f; }
.tab-search { align-self: center; display: grid; place-items: center; flex: none; width: 28px; height: 28px; margin-left: 6px; padding: 0; border: 0; border-radius: 9px; background: #a8fff0; }
.tabs { display: flex; flex: 1; min-width: 0; margin-left: 4px; }
.tab { position: relative; display: flex; align-items: center; flex: 1 1 0; min-width: 0; padding: 0 13px 0 10px; }
.tab::after { content: ""; position: absolute; right: 0; top: 12px; width: 2px; height: 16px; background: #6fd3c6; }
.tab.active::after, .tab.before::after { display: none; }
.tab-title { flex: 1; min-width: 0; margin: 0 4px 0 7px; overflow: hidden; white-space: nowrap; mask-image: linear-gradient(90deg, #000 50%, transparent 90%); }
.tab.active { color: #10201c; }
.tab.active::before { content: ""; position: absolute; z-index: 0; inset: 6px 2px 0 4px; border-radius: 10px 10px 0 0; background: #f1fcf6; }
.tab > * { position: relative; z-index: 1; }
.new-tab { width: 34px; }
.win-buttons { display: flex; flex: none; margin-left: 51px; color: #111; }
.win-buttons .bare { width: 46px; }
.min-line { width: 11px; height: 1px; background: #111; }
.chrome { flex: none; height: 81px; background: #f1fcf6; border-bottom: 1px solid #d8eee7; color: #26423b; border-radius: 8px 8px 0 0; }
.address-row { display: flex; align-items: center; height: 46px; padding: 0 14px 0 4px; }
.nav { width: 36px; }
.muted { color: #a0b0aa; }
.omnibox { display: flex; align-items: center; flex: 1; height: 34px; margin: 0 18px 0 8px; padding: 0 14px 0 5px; border-radius: 17px; background: #d8eee7; }
.site-info { display: grid; place-items: center; width: 24px; height: 24px; border-radius: 50%; background: #f1fcf6; }
.url { flex: 1; margin-left: 8px; padding: 0; border: 0; background: none; outline: 0; font-size: 13px; color: #2a3f39; }
.extensions { display: flex; align-items: center; gap: 19px; }
.mint-line { width: 2px; height: 16px; background: #9aeee0; }
.extensions .mint-line { margin: 0 -3px; }
.avatar { width: 20px; height: 20px; padding: 0; border: 0; border-radius: 50%; background: #c9184f; color: #fff; font-size: 11px; line-height: 20px; }
.bookmarks { display: flex; align-items: center; gap: 14px; height: 28px; padding-left: 12px; }
.bookmarks a { display: flex; align-items: center; gap: 7px; color: #3a4f49; }

/* flow builder header */
.app-header { display: flex; flex: none; height: 50px; background: #022a5c; color: #fff; }
.cell { border-right: 1px solid #001a3f; }
.back { width: 49px; }
.brand { display: flex; align-items: center; gap: 12px; width: 131px; padding-left: 17px; }
.flow-name { justify-content: flex-start; width: 290px; gap: 12px; padding-left: 18px; }
.flow-name .caret { margin-left: 6px; }
.doc { width: 13px; height: 16px; }
.help { margin-left: auto; margin-right: 25px; gap: 8px; font-size: 16px; }
.toolbar { display: flex; align-items: center; gap: 4px; flex: none; height: 49px; padding: 0 16px; border-bottom: 1px solid #c9c9c9; }
.btn { display: flex; align-items: center; justify-content: center; flex: none; height: 32px; padding: 0; border: 1px solid #747474; border-radius: 4px; background: #fff; color: #0b5cab; white-space: nowrap; }
.btn.icon { width: 32px; color: #747474; }
.btn.off { border-color: #c9c9c9; color: #c9c9c9; }
.btn.primary { border-color: #0070d2; background: #0070d2; color: #fff; }
.group { display: flex; }
.group .btn + .btn { margin-left: -1px; border-top-left-radius: 0; border-bottom-left-radius: 0; }
.group .btn:not(:last-child) { border-top-right-radius: 0; border-bottom-right-radius: 0; }
.issues { position: relative; }
.count { position: absolute; right: -7px; top: -8px; width: 20px; height: 16px; border-radius: 8px; background: #ea1c2c; font-size: 10px; font-weight: 700; line-height: 16px; }
.select-wrap, .input-wrap { position: relative; flex: 1; min-width: 0; }
.select-wrap > svg, .input-wrap > svg { position: absolute; right: 10px; top: 13px; color: #706e6b; pointer-events: none; }
.input-wrap > .i16 { top: 9px; }
.layout { flex: none; width: 117px; }
.control { display: block; width: 100%; height: 32px; padding: 0 12px; border: 1px solid #747474; border-radius: 4px; background: #fff; appearance: none; outline: 0; }
.control::placeholder { color: #747474; opacity: 1; }
.toolbar-right { display: flex; align-items: center; gap: 4px; margin-left: auto; }
.status { width: 62px; height: 26px; border-radius: 13px; background: #747474; color: #fff; font-weight: 700; line-height: 26px; text-align: center; }
.w-run { width: 56px; }
.w-debug { width: 72px; }
.w-tests { width: 93px; }
.w-version { width: 152px; }
.w-save { width: 61px; }
.w-activate { width: 80px; }

/* warnings panel */
.workspace { position: relative; display: flex; flex: 1; min-height: 0; }
.issues-panel { display: flex; flex-direction: column; width: 401px; flex: none; border-right: 1px solid #c9c9c9; box-shadow: 1px 0 3px rgba(0, 0, 0, .16); z-index: 1; background: #fff; }
.panel-head { display: flex; align-items: center; gap: 12px; height: 47px; flex: none; padding: 0 14px 0 24px; border-bottom: 1px solid #c9c9c9; color: #706e6b; }
.panel-head h2 { flex: 1; color: #181818; }
h2, h3 { font-size: 15px; line-height: 24px; }
.panel-body { display: flex; flex: 1; min-height: 0; }
.issue-list { flex: 1; overflow: hidden; }
.issue-tabs { display: flex; height: 40px; border-bottom: 1px solid #747474; color: #444; }
.issue-tabs .bare { height: 40px; padding: 2px 12px 0; }
.issue-tabs .current { border-bottom: 3px solid #4a90e2; color: #181818; font-weight: 700; }
.lead { margin: 12px 12px 0 16px; padding: 0 40px 12px 0; border-bottom: 1px solid #c9c9c9; font-weight: 700; line-height: 1.625; }
.issue { margin: 12px 12px 0 16px; padding-bottom: 12px; border-bottom: 1px solid #c9c9c9; line-height: 1.625; }
.issue a { display: block; color: #0b5cab; }
.issue ul { padding-left: 24px; }
.scrollbar { display: flex; flex-direction: column; align-items: center; flex: none; width: 15px; padding: 5px 0 4px; color: #8b8b8b; background: #fcfcfc; }
.tri { width: 10px; height: 7px; }
.flip { transform: rotate(180deg); }
.last { margin-top: auto; }
.thumb { width: 9px; border-radius: 5px; background: #8b8b8b; }
.left-scroll .thumb { height: 321px; margin-top: 6px; }
.grip { width: 8px; height: 16px; margin-top: 12px; color: #706e6b; }

/* canvas */
.canvas { display: flex; flex-direction: column; flex: 1; min-width: 0; overflow: hidden; }
.diagram { position: relative; flex: 1; overflow: hidden; background: #f3f3f3; }
.wires { position: absolute; left: 0; top: 0; width: 100%; height: 100%; fill: none; }
.wires .v { stroke: #747474; stroke-width: 3; }
.wires .h { stroke: #5c5c5c; stroke-width: 2; }
.adder { position: absolute; display: grid; place-items: center; width: 24px; height: 24px; padding: 0; border: 2px solid #747474; border-radius: 50%; background: #fff; color: #014486; }
.branch { position: absolute; top: 212px; width: 84px; height: 24px; border: 1px solid #939393; border-radius: 12px; background: #fff; font-size: 11px; font-weight: 700; line-height: 24px; text-align: center; }
.warn { position: absolute; display: grid; place-items: center; width: 34px; height: 27px; border-radius: 4px 4px 0 0; background: #e47f26; }
.warn svg { width: 14px; height: 12px; }
.node { position: absolute; display: flex; align-items: center; width: 285px; padding: 2px 25px 0 13px; border: 1px solid #c9c9c9; border-radius: 4px; background: #fff; box-shadow: 0 2px 3px rgba(0, 0, 0, .12); }
.node.selected { border: 1px solid #0b5cab; background: #f0f8f9; box-shadow: 0 0 0 2px #fff, 0 0 0 3px #0b5cab, 0 0 6px 3px #1b96ff; }
.node-icon { display: grid; place-items: center; width: 38px; margin: -2px 7px 0 0; flex: none; }
.node-icon svg { width: 32px; height: 32px; }
.node-icon .node-decision { width: 38px; height: 38px; }
.node-text { flex: 1; min-width: 0; line-height: 16px; }
.node-text strong { display: block; }
.node-text span { display: block; margin-top: 2px; color: #444; }
.node-menu { color: #747474; }
.zoom { position: absolute; left: 9px; bottom: 9px; }
.h-scroll { display: flex; align-items: center; height: 15px; flex: none; background: #fcfcfc; }
.h-scroll span { width: 813px; height: 9px; border-radius: 0 5px 5px 0; background: #8b8b8b; }

/* property panel */
.props { position: relative; display: flex; flex-direction: column; width: 640px; flex: none; background: #fff; box-shadow: -1px 0 3px rgba(0, 0, 0, .3); z-index: 1; overflow: hidden; }
.props-head { display: flex; align-items: center; gap: 8px; height: 49px; flex: none; padding: 0 14px 0 12px; border-bottom: 1px solid #c9c9c9; color: #706e6b; }
.props-head h2 { flex: 1; color: #181818; }
.props-body { display: flex; flex: 1; min-height: 0; }
.form { flex: 1; padding: 0 25px 0 24px; overflow: hidden; }
.field { width: 350px; padding-left: 30px; }
.form > .field { margin-top: -1px; }
.fields { display: flex; flex-direction: column; gap: 36px; margin-top: 22px; }
.tight .fields { margin-top: 32px; }
.label-row { display: flex; align-items: center; height: 16px; margin: 0 0 2px -22px; font-size: 11px; line-height: 16px; color: #444; }
.label-row > svg { margin-left: 10px; }
.label-row > .aa { width: 22px; }
.aa { display: flex; height: 16px; color: #706e6b; font-size: 12px; }
.aa i { font-style: normal; line-height: 14px; }
.aa i + i { line-height: 20px; }
.control-row { display: flex; gap: 4px; }
.type { width: 44px; gap: 5px; color: #706e6b; }
.group-section { margin-top: 32px; border-top: 1px solid #c9c9c9; padding-top: 11px; }
h3 { display: flex; align-items: center; gap: 10px; }
.chev { width: 14px; height: 10px; color: #706e6b; }
.tight h3 { line-height: 22px; }
.choices { display: flex; gap: 16px; margin: 12px 16px 0 0; }
.choice { position: relative; flex: 1; height: 96px; padding: 16px 48px 0 8px; border: 1px solid #c9c9c9; border-radius: 4px; box-shadow: 0 2px 2px rgba(0, 0, 0, .08); }
.choice input { position: absolute; opacity: 0; margin: 0; }
.choice b, .choice span { display: block; }
.choice span { margin-top: 7px; line-height: 15px; }
.choice.on { padding: 15px 47px 0 7px; border: 2px solid #1589ee; box-shadow: none; }
.tick { position: absolute; right: -1px; top: -1px; width: 29px; height: 28px; }
.pill-box { display: flex; align-items: center; height: 32px; padding: 0 2px; border: 1px solid #747474; border-radius: 4px; }
.pill { display: flex; align-items: center; gap: 8px; height: 26px; padding: 0 7px 0 3px; border: 1px solid #747474; border-radius: 4px; color: #0b5cab; }
.pill .bare { color: #706e6b; }
.pill-input { flex: 1; min-width: 0; border: 0; background: none; outline: 0; }
.right-scroll { width: 13px; margin-right: 1px; }
.right-scroll .thumb { height: 329px; margin-top: 264px; }
.side-handle { position: absolute; right: 0; top: 24px; display: grid; place-items: center; width: 14px; height: 31px; border: solid #eee; border-width: 3px 0 3px 3px; background: #93c2cc; }
.side-handle svg { width: 8px; height: 12px; }
.pointer { position: absolute; left: 254px; top: 282px; width: 12px; height: 19px; }
.tips { position: absolute; right: 16px; bottom: 0; display: flex; align-items: center; width: 350px; height: 39px; padding: 4px 18px 0 16px; border: 1px solid #c9c9c9; border-bottom: 0; border-radius: 4px 4px 0 0; background: #fff; box-shadow: 0 -1px 3px rgba(0, 0, 0, .2); color: #181818; }
.tips > span { margin: 0 4px 0 12px; }
.tips em { width: 16px; height: 16px; margin-right: auto; border-radius: 50%; background: #3f8ff0; color: #fff; font-size: 10px; font-style: normal; line-height: 16px; text-align: center; }
.tips .bare { margin-left: 15px; color: #706e6b; }
.tip-line { width: 14px; height: 2px; margin-top: 12px; background: #706e6b; }

/* taskbar */
.taskbar { display: flex; align-items: center; flex: none; height: 48px; padding: 0 22px 0 18px; background: #202020; color: #fff; border-top: 1px solid #3a3a3a; }
.weather { display: flex; gap: 8px; align-items: center; width: 464px; }
.weather div { display: flex; flex-direction: column; font-size: 11px; line-height: 16px; }
.weather small { font-size: 11px; color: #c4c4c4; }
.start { width: 30px; }
.search { display: flex; align-items: center; width: 220px; height: 32px; margin-left: 9px; padding: 0 6px 0 12px; border: 1px solid #555; border-radius: 16px; background: #3c3c3c; }
.search input { flex: 1; min-width: 0; margin-left: 8px; padding: 0; border: 0; background: none; outline: 0; }
.search input::placeholder { color: #ccc; opacity: 1; }
.moon { width: 44px; height: 28px; }
.apps { display: flex; margin-left: 2px; }
.app { position: relative; width: 44px; height: 42px; border-radius: 4px; }
.app > svg { width: 26px; height: 26px; }
.app.focus { background: #2e2e2e; }
.app.open::after, .app.focus::after { content: ""; position: absolute; bottom: 1px; left: 19px; width: 6px; height: 3px; border-radius: 2px; background: #999; }
.app.focus::after { left: 14px; width: 16px; background: #5cb8f0; }
.badge { position: absolute; right: 5px; top: 2px; width: 16px; height: 16px; border-radius: 50%; font-size: 10px; line-height: 16px; }
.face { background: radial-gradient(circle at 50% 50%, #a9714f 30%, #2a211d 34%, #2a211d 42%, #e8e8e8 46%); }
.dark { background: #15181c; }
.pink { background: #c9184f; }
.pc { position: absolute; left: 15px; top: 11px; font-size: 10px; font-weight: 700; line-height: 14px; }
.tray { display: flex; align-items: center; gap: 16px; margin-left: auto; }
.tray svg:nth-of-type(4) { margin-right: -8px; }
.clock { display: flex; flex-direction: column; width: 56px; font-size: 11px; line-height: 16px; text-align: right; white-space: nowrap; }
.tray .i14 { margin-left: -8px; height: 16px; }
</style>
